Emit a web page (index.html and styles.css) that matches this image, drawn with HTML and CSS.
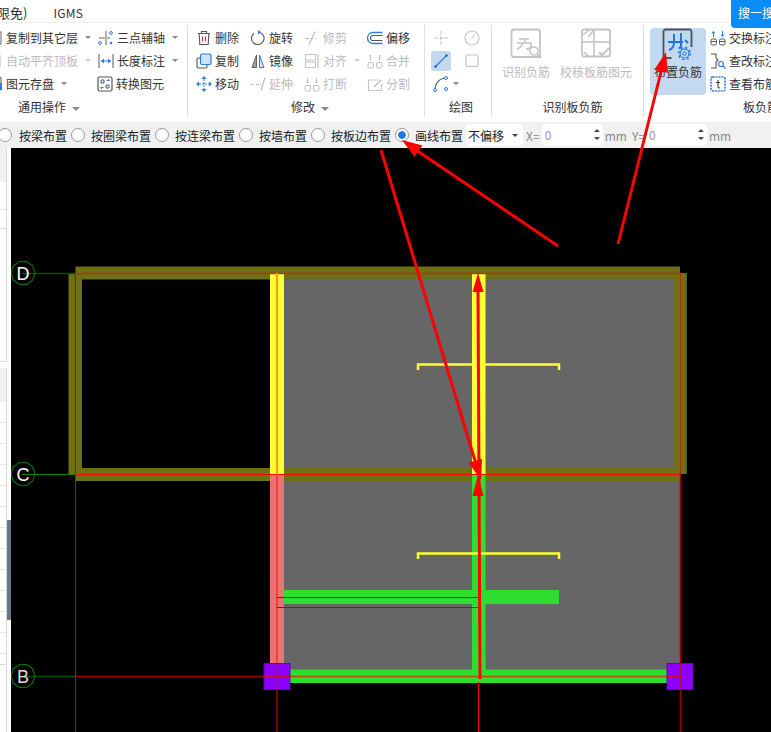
FILE: index.html
```html
<!DOCTYPE html>
<html lang="zh">
<head>
<meta charset="utf-8">
<title>板负筋布置</title>
<link rel="stylesheet" href="styles.css">
</head>
<body>
<div class="app">
  <header class="menubar">
    <span class="menu-clip">限免)</span>
    <span class="menu-item">IGMS</span>
  </header>
  <a class="search-btn">搜一搜</a>

  <section class="ribbon">
    <div class="group g1">
      <div class="rows g1-rows">
        <div class="item"><svg class="ic" viewBox="0 0 16 16"><rect x="2" y="2" width="12" height="12" fill="none" stroke="#666"/><path d="M12 11v4H9" fill="none" stroke="#2b7de0" stroke-width="1.4"/></svg><span>复制到其它层</span><i class="caret"></i></div>
        <div class="item"><svg class="ic" viewBox="0 0 16 16"><path d="M8 1v14M1 8h6" stroke="#666" fill="none"/><circle cx="2" cy="13" r="1.4" fill="none" stroke="#2b7de0"/><circle cx="13" cy="3" r="1.4" fill="none" stroke="#2b7de0"/><circle cx="13" cy="13" r="1.2" fill="#2b7de0"/><path d="M9 8h3" stroke="#666"/></svg><span>三点辅轴</span><i class="caret"></i></div>
        <div class="item off"><svg class="ic" viewBox="0 0 16 16"><path d="M13 2v12" stroke="#ccc" stroke-width="1.5"/></svg><span>自动平齐顶板</span><i class="caret"></i></div>
        <div class="item"><svg class="ic" viewBox="0 0 16 16"><path d="M1 1v14M15 1v14" stroke="#555" fill="none"/><path d="M3 8h10" stroke="#2b7de0"/><path d="M3 8l3-2.5v5zM13 8l-3-2.5v5z" fill="#2b7de0"/></svg><span>长度标注</span><i class="caret"></i></div>
        <div class="item"><svg class="ic" viewBox="0 0 16 16"><rect x="-2" y="1" width="16" height="13" rx="1" fill="#fff" stroke="#555"/><path d="M14 7v7" stroke="#2b7de0" stroke-width="2"/></svg><span>图元存盘</span><i class="caret"></i></div>
        <div class="item"><svg class="ic ic-shift" viewBox="0 0 16 16"><rect x="1" y="1" width="14" height="14" rx="1.5" fill="none" stroke="#555" stroke-width="1.2"/><path d="M4 4h3v3H4zM9 9h3v3H9z" fill="none" stroke="#555"/><path d="M9.500 4.500h3l-1.500-1.500M6.500 11.500h-3l1.500 1.500" fill="none" stroke="#2b7de0"/></svg><span>转换图元</span></div>
      </div>
      <div class="group-label left">通用操作<i class="caret wide"></i></div>
    </div>

    <div class="group g2">
      <div class="rows g2-rows">
        <div class="item"><svg class="ic" viewBox="0 0 16 16"><path d="M2 3.500h12M5.500 3.500V1.500h5v2M3.200 3.500l.6 11h8.400l.6-11" fill="none" stroke="#555" stroke-width="1.1"/><path d="M6.500 6.500v5M9.500 6.500v5" stroke="#e0312a" stroke-width="1.2"/></svg><span>删除</span></div>
        <div class="item"><svg class="ic" viewBox="0 0 16 16"><path d="M9.500 2.200A6.300 6.300 0 1 1 4 3.200" fill="none" stroke="#555" stroke-width="1.1"/><path d="M8 .2l3.500 2L8 4.200z" fill="#2b7de0"/></svg><span>旋转</span></div>
        <div class="item off"><svg class="ic" viewBox="0 0 16 16"><path d="M1 8.500h4M7 8.500h2M11 8.500h1M11 1.500L5 14.500" fill="none" stroke="#bbb" stroke-width="1.1"/></svg><span>修剪</span></div>
        <div class="item"><svg class="ic" viewBox="0 0 16 16"><path d="M15.500 2.500H6a5.500 5.500 0 0 0 0 11h9.500" fill="none" stroke="#2b7de0" stroke-width="1.3"/><path d="M15.500 5.500H6a2.500 2.500 0 0 0 0 5h9.500" fill="none" stroke="#555" stroke-width="1.1"/></svg><span>偏移</span></div>

        <div class="item"><svg class="ic" viewBox="0 0 16 16"><rect x="1" y="5" width="10" height="10" rx="1.500" fill="#fff" stroke="#555" stroke-width="1.1"/><rect x="4.500" y="1" width="10.500" height="10.500" rx="1.500" fill="#cfe2fa" stroke="#2b7de0" stroke-width="1.2"/></svg><span>复制</span></div>
        <div class="item"><svg class="ic" viewBox="0 0 16 16"><path d="M6.500 2L2 14.500h4.500z" fill="#9aa3ad" stroke="#555" stroke-width=".9"/><path d="M9.500 2l4.500 12.500H9.500z" fill="#cfe2fa" stroke="#2b7de0" stroke-width="1"/></svg><span>镜像</span></div>
        <div class="item off"><svg class="ic" viewBox="0 0 16 16"><rect x="1.500" y="1.500" width="10" height="5.500" fill="none" stroke="#c4c4c4"/><rect x="1.500" y="9" width="10" height="5.500" fill="none" stroke="#c4c4c4"/><path d="M14 1v14" stroke="#bbb" stroke-width="1.2"/></svg><span>对齐</span><i class="caret"></i></div>
        <div class="item off"><svg class="ic" viewBox="0 0 16 16"><rect x="1" y="9.500" width="5.500" height="5.500" rx="1.500" fill="none" stroke="#bbb"/><rect x="9.500" y="9.500" width="5.500" height="5.500" rx="1.500" fill="none" stroke="#bbb"/><path d="M3.500 2v5M12.500 2v5M3.500 2l-1.500 1.500M12.500 2l1.500 1.500" fill="none" stroke="#bbb"/></svg><span>合并</span></div>

        <div class="item"><svg class="ic" viewBox="0 0 16 16"><path d="M8 3v10M3 8h10" stroke="#2b7de0" stroke-width="1" stroke-dasharray="2 1"/><path d="M8 0l2.500 3h-5zM8 16l2.500-3h-5zM0 8l3-2.500v5zM16 8l-3-2.500v5z" fill="#2b7de0"/></svg><span>移动</span></div>
        <div class="item off"><svg class="ic" viewBox="0 0 16 16"><path d="M1 8.500h3M6 8.500h3M10 8.500h1M15 1.500l-4 13" fill="none" stroke="#bbb" stroke-width="1.1"/></svg><span>延伸</span></div>
        <div class="item off"><svg class="ic" viewBox="0 0 16 16"><rect x="1" y="9.500" width="5.500" height="5.500" rx="1.500" fill="none" stroke="#bbb"/><rect x="9.500" y="9.500" width="5.500" height="5.500" rx="1.500" fill="none" stroke="#bbb"/><path d="M3.500 2v5M12.500 2v5M2 5.500l1.500 1.500 1.500-1.500M11 5.500l1.500 1.500 1.500-1.500" fill="none" stroke="#bbb"/></svg><span>打断</span></div>
        <div class="item off"><svg class="ic" viewBox="0 0 16 16"><path d="M11 4H1.500v10.500h13V8" fill="none" stroke="#c4c4c4" stroke-width="1.100"/><path d="M7 11l7-7" stroke="#bbb" stroke-width="1.200"/></svg><span>分割</span></div>
      </div>
      <div class="group-label">修改<i class="caret wide"></i></div>
    </div>

    <div class="group g3">
      <div class="rows g3-rows">
        <div class="tool"><svg class="ic" viewBox="0 0 16 16"><path d="M8 1v4M8 11v4M1 8h4M11 8h4" stroke="#c4c4c4"/><circle cx="8" cy="8" r="1.500" fill="#c4c4c4"/></svg></div>
        <div class="tool"><svg class="ic" viewBox="0 0 16 16"><circle cx="8" cy="8" r="7" fill="none" stroke="#c4c4c4" stroke-width="1.200"/><path d="M8 8l3-4" stroke="#c4c4c4"/></svg></div>
        <div class="tool active"><svg class="ic" viewBox="0 0 16 16"><path d="M2.500 13.500l11-11" stroke="#2b7de0" stroke-width="1.200"/><circle cx="2.500" cy="13.500" r="1.200" fill="#1b5fb8"/><circle cx="13.500" cy="2.500" r="1.200" fill="#1b5fb8"/></svg></div>
        <div class="tool"><svg class="ic" viewBox="0 0 16 16"><rect x="2" y="2" width="12" height="11.500" rx="1.500" fill="none" stroke="#c4c4c4" stroke-width="1.200"/></svg></div>
        <div class="tool arc"><svg class="ic" viewBox="0 0 16 16"><path d="M2 14C2 7 7 2 13 2" fill="none" stroke="#555" stroke-width="1.100"/><circle cx="2" cy="14" r="1.500" fill="#fff" stroke="#2b7de0"/><circle cx="13" cy="2" r="1.500" fill="#fff" stroke="#2b7de0"/><circle cx="13" cy="13" r="1.500" fill="#fff" stroke="#2b7de0"/></svg><i class="caret"></i></div>
      </div>
      <div class="group-label">绘图</div>
    </div>

    <div class="group g4">
      <div class="bigs">
        <div class="big off b-rec">
          <svg class="ic-big" viewBox="0 0 32 32"><rect x="1.500" y="1.500" width="28.500" height="27.500" rx="2.500" fill="none" stroke="#c4c4c4" stroke-width="1.800"/><path d="M7 15h14c1 4-2 7-5 6M15 10v4M9 11h10M13 15c-1 3-3 5-6 6" fill="none" stroke="#c4c4c4" stroke-width="1.700"/><circle cx="24" cy="23" r="4" fill="#fff" stroke="#c4c4c4" stroke-width="1.600"/><path d="M27 26l4 4" stroke="#c4c4c4" stroke-width="1.800"/></svg>
          <span>识别负筋</span>
        </div>
        <div class="big off b-check">
          <svg class="ic-big" viewBox="0 0 32 32"><rect x="2" y="1.500" width="28" height="27" rx="2" fill="none" stroke="#c4c4c4" stroke-width="1.800"/><path d="M2 14h28M14 2v27" stroke="#c4c4c4" stroke-width="1.600"/><path d="M3 7l6-5M8 9l6-7M4 24l4 4" stroke="#c4c4c4" stroke-width="1.500"/><path d="M19 24l3 3 7-7" fill="#fff" stroke="#c4c4c4" stroke-width="2"/></svg>
          <span>校核板筋图元</span>
        </div>
      </div>
      <div class="group-label">识别板负筋</div>
    </div>

    <div class="group g5">
      <div class="g5-body">
        <div class="big selected">
          <svg class="ic-big" viewBox="0 0 32 32"><path d="M29.500 19V3.500a2 2 0 0 0-2-2H3.500a2 2 0 0 0-2 2V30h8" fill="none" stroke="#4a5360" stroke-width="1.800"/><path d="M6 14h15M12 6v8c0 4-2 7-5 8M19 5v13c0 1.500-1 2-2.500 2M23 12l3 3" fill="none" stroke="#1c74d8" stroke-width="1.900"/><circle cx="22.500" cy="25.500" r="4.500" fill="#c3d9f0" stroke="#1c74d8" stroke-width="1.200"/><circle cx="22.500" cy="25.500" r="6" fill="none" stroke="#1c74d8" stroke-width="1.400" stroke-dasharray="2.200 2.500"/><circle cx="22.500" cy="25.500" r="1.800" fill="none" stroke="#1c74d8" stroke-width="1"/></svg>
          <span>布置负筋</span>
        </div>
        <div class="g5-col">
          <div class="item"><svg class="ic" viewBox="0 0 16 16"><rect x="1" y="9" width="5.500" height="6" rx="1.500" fill="none" stroke="#555"/><rect x="9.500" y="9" width="5.500" height="6" rx="1.500" fill="none" stroke="#555"/><path d="M1 11.500h5.500M9.500 11.500h5.500" stroke="#555"/><path d="M3.500 7V2M2 3.500l1.500-2 1.500 2M12.500 1v5M11 4.500l1.500 2 1.500-2" fill="none" stroke="#2b7de0"/></svg><span>交换标注</span></div>
          <div class="item"><svg class="ic" viewBox="0 0 16 16"><path d="M1 1h5v4l2 2-2 2v6H1" fill="none" stroke="#555" stroke-width="1.100"/><circle cx="11" cy="11" r="2.500" fill="none" stroke="#2b7de0" stroke-width="1.200"/><path d="M13 13l2.500 2.500" stroke="#2b7de0" stroke-width="1.200"/></svg><span>查改标注</span></div>
          <div class="item"><svg class="ic" viewBox="0 0 16 16"><rect x="1" y="1" width="14" height="14" rx="1.500" fill="none" stroke="#2b7de0" stroke-width="1.600" stroke-dasharray="2 1"/><path d="M8 4v7c0 1 1 1 2 1M6 6.500h4" fill="none" stroke="#444" stroke-width="1.100"/></svg><span>查看布筋</span></div>
        </div>
      </div>
      <div class="group-label">板负筋</div>
    </div>
  </section>

  <form class="options">
    <input class="radio first" type="radio" name="mode"><label>按梁布置</label>
    <input class="radio" type="radio" name="mode"><label>按圈梁布置</label>
    <input class="radio" type="radio" name="mode"><label>按连梁布置</label>
    <input class="radio" type="radio" name="mode"><label>按墙布置</label>
    <input class="radio" type="radio" name="mode"><label>按板边布置</label>
    <input class="radio" type="radio" name="mode" checked><label>画线布置</label>
    <div class="select">不偏移<i class="caret dark"></i></div>
    <span class="field-label">X=</span>
    <div class="spin">0<span class="arrows"><i></i><i></i></span></div>
    <span class="field-label">mm</span>
    <span class="field-label tight">Y=</span>
    <div class="spin">0<span class="arrows"><i></i><i></i></span></div>
    <span class="field-label">mm</span>
  </form>

  <main class="work">
    <aside class="strip">
      <div class="panel upper">
        <div class="panel-head"></div>
        <div class="panel-input"></div>
        <div class="panel-line"></div>
        <div class="panel-fill"></div>
      </div>
      <div class="panel lower">
        <div class="panel-head"></div>
        <div class="panel-rows"></div>
      </div>
      <div class="handle"></div>
    </aside>

    <svg class="canvas" viewBox="11 148 760 584">
      <defs>
        <polygon id="bubble" points="12,0 9.700,7.050 3.700,11.400 -3.700,11.400 -9.700,7.050 -12,0 -9.700,-7.050 -3.700,-11.400 3.700,-11.400 9.700,-7.050" fill="none" stroke-width="1.200"/>
      </defs>
      <rect x="284" y="279" width="390" height="190" fill="#666"/>
      <rect x="284" y="481" width="396" height="189" fill="#666"/>

      <rect x="68.500" y="273" width="13.500" height="201" fill="#6f6f16"/>
      <rect x="673.500" y="273" width="13.300" height="201" fill="#6f6f16"/>
      <rect x="75.500" y="266.500" width="604.500" height="13" fill="#6f6f16"/>
      <rect x="75.500" y="468" width="604.500" height="13" fill="#6f6f16"/>

      <rect x="270" y="273" width="14" height="201" fill="#ffff33"/>
      <rect x="472" y="273" width="13.500" height="201" fill="#ffff33"/>
      <rect x="270" y="474" width="14" height="190" fill="#e87373"/>
      <rect x="472" y="474" width="13.500" height="196" fill="#2ede2e"/>
      <rect x="284" y="590" width="275" height="14" fill="#2ede2e"/>
      <rect x="290" y="669.500" width="377" height="13.500" fill="#2ede2e"/>

      <path d="M418 370v-5.500h141v5.500" fill="none" stroke="#ffff33" stroke-width="2.500"/>
      <path d="M418 559v-5.500h141v5.500" fill="none" stroke="#ffff33" stroke-width="2.500"/>

      <g fill="none" stroke-width="1">
        <path d="M22 273.500h54" stroke="#064d06" stroke-width="1.500"/>
        <path d="M22 474.500h54" stroke="#0a8a0a"/>
        <path d="M22 676.500h54" stroke="#064d06" stroke-width="1.500"/>
        <path d="M75.500 273v459" stroke="#dd0000"/>
        <path d="M75.500 273.500h605" stroke="#c0300c" stroke-width="1.500"/>
        <path d="M75.500 474.500h605" stroke="#ff0000"/>
        <path d="M75.500 676.500h200" stroke="#a00000" stroke-width="1.500"/>
        <path d="M277 273v201" stroke="#ff9a1a" stroke-width="2"/>
        <path d="M277 474v190" stroke="#f83c3c" stroke-width="2"/>
        <path d="M277 597.500h201M277 607.500h201" stroke="#8a1616"/>
        <path d="M290 676.500h390" stroke="#b84a10" stroke-width="1.500"/>
        <path d="M277 690v42" stroke="#a00000" stroke-width="1.500"/>
        <path d="M478.500 682v50" stroke="#ff0000"/>
        <path d="M680.500 273v201" stroke="#b52a10"/>
        <path d="M680.500 474v258" stroke="#a00000" stroke-width="1.500"/>
      </g>

      <rect x="264" y="663.500" width="26" height="26" fill="#8b00ff" stroke="#5a10a0"/>
      <rect x="667" y="663.500" width="26" height="26" fill="#8b00ff" stroke="#5a10a0"/>
      <path d="M264 676.500h26M667 676.500h14" stroke="#c8142c"/>
      <path d="M277 664v25M680.500 664v25" stroke="#b0103a"/>

      <use href="#bubble" x="23" y="273" stroke="#0a6a0a"/>
      <use href="#bubble" x="23" y="474" stroke="#0a6a0a"/>
      <use href="#bubble" x="23" y="676" stroke="#0a6a0a"/>
      <text class="axis" x="23" y="279.500">D</text>
      <text class="axis" x="23" y="480.500">C</text>
      <text class="axis dim" x="23" y="682.500">B</text>
    </svg>
  </main>

  <svg class="marks" viewBox="0 0 771 732">
    <g stroke="#ff0000" stroke-width="3" fill="none">
      <path d="M558 246L416 150"/>
      <path d="M618 244L662 68"/>
      <path d="M381 150L476 464"/>
      <path d="M480 679L478 288"/>
    </g>
    <g fill="#ff0000">
      <polygon points="402,140 422.400,145.400 414.600,157"/>
      <polygon points="666,52 667.900,73.100 654.300,69.700"/>
      <polygon points="481,480 482,458.800 468.600,462.800"/>
      <polygon points="478,273 483.500,292 472.500,292"/>
      <polygon points="478,475 483.500,496 472.500,496"/>
    </g>
  </svg>
</div>
</body>
</html>
```

FILE: styles.css
```css
* { box-sizing: border-box; }

html, body {
  margin: 0;
  height: 100%;
  overflow: hidden;
  background: #fff;
}

body {
  font-family: "Noto Sans CJK SC", "Liberation Sans", sans-serif;
  font-size: 12px;
  color: #333;
}

.app {
  position: relative;
  width: 771px;
  height: 732px;
  overflow: hidden;
  display: flex;
  flex-direction: column;
}

/* Menu bar */
.menubar {
  height: 23px;
  flex: none;
  display: flex;
  align-items: center;
  gap: 26px;
  margin-left: -3px;
  padding-top: 3px;
  border-bottom: 1px solid #efefef;
}

.menu-clip {
  font-size: 13px;
}

.menu-item {
  font-size: 12px;
  letter-spacing: .3px;
}

.search-btn {
  position: absolute;
  top: 0;
  right: 0;
  width: 40px;
  height: 28px;
  padding-left: 7px;
  background: #0a8cf8;
  border-bottom-left-radius: 4px;
  color: #fff;
  font-size: 12px;
  line-height: 26px;
  white-space: nowrap;
  overflow: hidden;
}

/* Ribbon */
.ribbon {
  height: 99px;
  flex: none;
  display: flex;
  margin-left: -13px;
  background: #fff;
  white-space: nowrap;
}

.group {
  flex: none;
  height: 92px;
  margin-top: 2px;
  padding-top: 1px;
  border-right: 1px solid #dfdfdf;
  display: flex;
  flex-direction: column;
}

.g1 { width: 201px; }
.g2 { width: 237px; padding-left: 8px; }
.g3 { width: 67px; padding-left: 6px; }
.g4 { width: 152px; padding-left: 10px; }
.g5 { width: 228px; padding-left: 6px; border-right: 0; }

.rows {
  display: grid;
  grid-auto-rows: 23px;
  height: 69px;
}

.g1-rows { grid-template-columns: 111px 1fr; }
.g2-rows { grid-template-columns: 54px 54px 63px 57px; }
.g3-rows { grid-template-columns: 31px 31px; }

.item {
  display: flex;
  align-items: center;
  gap: 3px;
}

.item.off { color: #bbb; }

.ic {
  width: 16px;
  height: 16px;
  flex: none;
}

.ic-shift {
  margin-left: -1px;
}

.caret {
  flex: none;
  width: 0;
  height: 0;
  margin-left: 4px;
  border-left: 3px solid transparent;
  border-right: 3px solid transparent;
  border-top: 3px solid #888;
}

.off .caret { border-top-color: #ccc; }

.caret.wide {
  display: inline-block;
  margin-left: 6px;
  vertical-align: middle;
  border-left-width: 4px;
  border-right-width: 4px;
  border-top-width: 4px;
}

.caret.dark {
  margin-left: 8px;
  border-top-color: #444;
}

.group-label {
  height: 22px;
  line-height: 24px;
  text-align: center;
}

.group-label.left {
  padding-left: 31px;
  text-align: left;
}

/* Draw tools */
.tool {
  display: flex;
  align-items: center;
  justify-content: flex-start;
  padding-left: 2px;
}

.tool.active .ic {
  width: 20px;
  height: 20px;
  margin-left: -2px;
  padding: 2px;
  background: #c3d9f0;
  border-radius: 3px;
}

/* Big buttons */
.bigs {
  height: 69px;
  display: flex;
  gap: 10px;
}

.big {
  display: flex;
  flex-direction: column;
  align-items: center;
  line-height: 16px;
}

.big.off { color: #bbb; }

.ic-big {
  width: 32px;
  height: 32px;
  margin: 2px 0 4px;
  flex: none;
}

.g5-body {
  height: 69px;
  display: flex;
  gap: 4px;
}

.big.selected {
  width: 56px;
  height: 67px;
  margin-top: 2px;
  background: #c3d9f0;
  border-radius: 4px;
}

.big.selected .ic-big {
  margin: 0 0 4px;
}

.g5-col {
  display: grid;
  grid-auto-rows: 23px;
}

/* Options bar */
.options {
  height: 26px;
  flex: none;
  margin: 0;
  display: flex;
  align-items: center;
  background: #f1f1f1;
  color: #222;
  white-space: nowrap;
}

.radio {
  appearance: none;
  flex: none;
  width: 14px;
  height: 14px;
  margin: 0 6px 0 4px;
  border: 1px solid #999;
  border-radius: 50%;
  background: #fff;
}

.radio.first { margin-left: -2px; margin-right: 7px; }

.radio:checked {
  border-color: #999;
  background: radial-gradient(circle, #1f78e6 0 3.500px, #fff 4px);
}

.select {
  flex: none;
  width: 57px;
  height: 22px;
  margin-left: 3px;
  padding-left: 2px;
  display: flex;
  align-items: center;
  background: #fff;
  border-radius: 4px;
}

.field-label {
  flex: none;
  margin: 0 2px;
  color: #888;
}

.field-label.tight { margin-left: 3px; margin-right: 1px; }

.options .select + .field-label { margin-left: 3px; }

.spin {
  position: relative;
  flex: none;
  width: 61px;
  height: 22px;
  padding-left: 3px;
  line-height: 22px;
  background: #fff;
  border-radius: 4px;
  color: #999;
}

.arrows {
  position: absolute;
  top: 5px;
  right: 3px;
  display: flex;
  flex-direction: column;
  gap: 5px;
}

.arrows i {
  display: block;
  width: 0;
  height: 0;
  border-left: 3px solid transparent;
  border-right: 3px solid transparent;
  border-bottom: 3px solid #444;
}

.arrows i + i {
  border-bottom: 0;
  border-top: 3px solid #444;
}

/* Work area */
.work {
  flex: 1;
  min-height: 0;
  display: flex;
}

.strip {
  position: relative;
  flex: none;
  width: 11px;
  background: #fff;
}

.panel {
  width: 7px;
  border-right: 1px solid #d6d6d6;
  background: #fff;
}

.upper { height: 214px; border-bottom: 1px solid #d6d6d6; }
.lower { height: 297px; margin-top: 6px; border-bottom: 1px solid #d6d6d6; }

.panel-head {
  height: 34px;
  background: #f1f1f1;
}

.panel-input {
  height: 28px;
  border-bottom: 1px solid #e3e3e3;
}

.panel-line {
  height: 19px;
  border-bottom: 1px solid #d6d6d6;
}

.panel-rows {
  height: 262px;
  background: repeating-linear-gradient(#fff 0 20px, #e4e4e4 20px 21px);
}

.handle {
  position: absolute;
  top: 372px;
  left: 7px;
  width: 4px;
  height: 100px;
  background: #6b7685;
}

.strip::after {
  content: "";
  position: absolute;
  top: 518px;
  bottom: 0;
  left: 6px;
  width: 1px;
  background: #d6d6d6;
}

.canvas {
  flex: 1;
  display: block;
  height: 584px;
  background: #000;
}

.axis {
  fill: #fff;
  font-family: "Liberation Sans", sans-serif;
  font-size: 18px;
  text-anchor: middle;
}

.axis.dim { fill: #ddd; }

/* Annotation arrows over the whole screenshot */
.marks {
  position: absolute;
  top: 0;
  left: 0;
  width: 771px;
  height: 732px;
  pointer-events: none;
}
```
